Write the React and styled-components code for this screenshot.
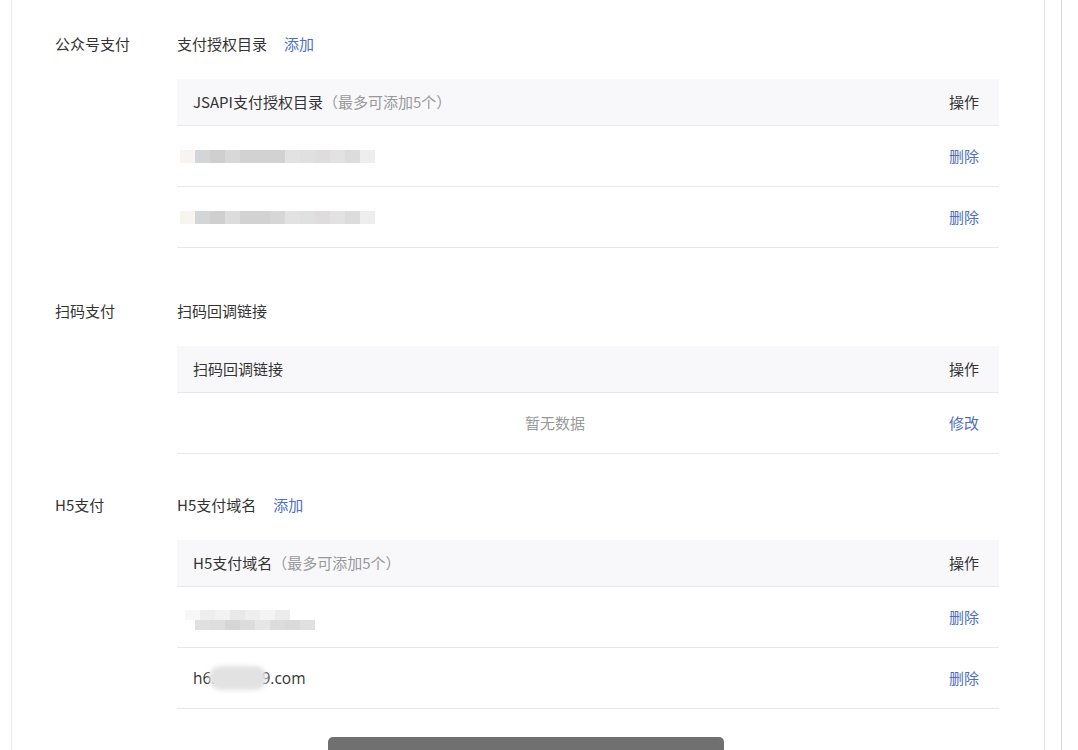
import styled, { createGlobalStyle } from 'styled-components';

const GlobalStyle = createGlobalStyle`
  html, body {
    margin: 0;
    padding: 0;
    background: #fff;
  }
  body {
    font-family: "Noto Sans CJK SC", "Noto Sans", sans-serif;
    font-size: 15px;
    color: #333;
    overflow: hidden;
  }
`;

const Outer = styled.div`
  width: 1062px;
  height: 750px;
  border-right: 1px solid #d9d9d9;
  padding-left: 11px;
  box-sizing: border-box;
`;

const Card = styled.div`
  width: 1034px;
  height: 750px;
  box-sizing: border-box;
  border-left: 1px solid #ececec;
  border-right: 1px solid #e4e4e4;
  padding: 34px 0 0 43px;
`;

const Section = styled.section`
  display: flex;
  margin-bottom: ${(p) => p.$gap}px;
`;

const Label = styled.div`
  width: 122px;
  flex-shrink: 0;
  line-height: 20px;
`;

const Body = styled.div`
  width: 822px;
`;

const TitleRow = styled.div`
  display: flex;
  align-items: center;
  line-height: 20px;
  margin-bottom: 25px;
`;

const Link = styled.a`
  color: #4f6fc3;
  cursor: pointer;
  margin-left: ${(p) => p.$ml || 0}px;
`;

const Table = styled.div`
  width: 822px;
`;

const Row = styled.div`
  display: grid;
  grid-template-columns: 1fr 66px;
  align-items: center;
  height: ${(p) => (p.$head ? 46 : 60)}px;
  background: ${(p) => (p.$head ? '#f8f8fa' : '#fff')};
  border-bottom: 1px solid #e8e8ec;
`;

const Cell = styled.div`
  padding-left: ${(p) => (p.$center ? 0 : 16)}px;
  display: flex;
  align-items: center;
  justify-content: ${(p) => (p.$center ? 'center' : 'flex-start')};
  line-height: 20px;
`;

const OpCell = styled.div`
  text-align: right;
  padding-right: 20px;
  line-height: 20px;
`;

const Hint = styled.span`
  color: #999;
`;

const Empty = styled.span`
  color: #999;
`;

const Mosaic = styled.div`
  display: flex;
  flex-direction: column;
  margin-left: ${(p) => p.$ml}px;
  margin-top: ${(p) => p.$mt || 0}px;
`;

const MosaicLine = styled.div`
  display: flex;
  height: ${(p) => p.$h}px;
  margin-left: ${(p) => p.$offset || 0}px;
`;

const Tile = styled.span`
  width: 15px;
  height: 100%;
  background: ${(p) => p.$c};
`;

const Smudge = styled.span`
  display: inline-block;
  width: 58px;
  height: 24px;
  margin: 0 -6px 0 -6px;
  background: #e2e2e2;
  border-radius: 12px;
  filter: blur(2px);
  vertical-align: middle;
`;

const Domain = styled.span`
  display: inline-flex;
  align-items: center;
  font-family: "Open Sans", "Noto Sans", sans-serif;
  font-size: 15.5px;
`;

const SaveBar = styled.button`
  position: fixed;
  left: 328px;
  top: 737px;
  width: 396px;
  height: 40px;
  border: none;
  border-radius: 5px;
  background: #707070;
`;

const rowA = ['#f8f5f0', '#d3d6d8', '#cfcfcf', '#d8d8d8', '#d2d2d2', '#d2d2d2', '#d2d2d2', '#e2e2e2', '#e0e0e0', '#dedcdc', '#e2e2e2', '#dcdcdc', '#eeeeee'];
const rowB = ['#f8f5f0', '#d3d6d8', '#cfcfcf', '#dcdcdc', '#d2d2d2', '#d2d2d2', '#d6d6d6', '#e2e2e2', '#e0e0e0', '#dedcdc', '#e2e2e2', '#dcdcdc', '#eeeeee'];
const h5Top = ['#f7f7f7', '#eeeeee', '#f2f2f2', '#e8e8e8', '#eeeeee', '#f4f4f4', '#ececec'];
const h5Bottom = ['#e0e0e0', '#dedede', '#d6d6d6', '#dcdcdc', '#e6e6e6', '#dcdcdc', '#dadada', '#e0e0e0'];

const Blur = ({ colors }) => (
  <Mosaic $ml={-13}>
    <MosaicLine $h={13}>
      {colors.map((c, i) => <Tile key={i} $c={c} />)}
    </MosaicLine>
  </Mosaic>
);

const App = () => (
  <>
    <GlobalStyle />
    <Outer>
      <Card>
        <Section $gap={53}>
          <Label>公众号支付</Label>
          <Body>
            <TitleRow>
              支付授权目录<Link $ml={17}>添加</Link>
            </TitleRow>
            <Table>
              <Row $head>
                <Cell>JSAPI支付授权目录<Hint>（最多可添加5个）</Hint></Cell>
                <OpCell>操作</OpCell>
              </Row>
              <Row>
                <Cell><Blur colors={rowA} /></Cell>
                <OpCell><Link>删除</Link></OpCell>
              </Row>
              <Row>
                <Cell><Blur colors={rowB} /></Cell>
                <OpCell><Link>删除</Link></OpCell>
              </Row>
            </Table>
          </Body>
        </Section>

        <Section $gap={41}>
          <Label>扫码支付</Label>
          <Body>
            <TitleRow>扫码回调链接</TitleRow>
            <Table>
              <Row $head>
                <Cell>扫码回调链接</Cell>
                <OpCell>操作</OpCell>
              </Row>
              <Row>
                <Cell $center><Empty>暂无数据</Empty></Cell>
                <OpCell><Link>修改</Link></OpCell>
              </Row>
            </Table>
          </Body>
        </Section>

        <Section $gap={0}>
          <Label>H5支付</Label>
          <Body>
            <TitleRow>
              H5支付域名<Link $ml={17}>添加</Link>
            </TitleRow>
            <Table>
              <Row $head>
                <Cell>H5支付域名<Hint>（最多可添加5个）</Hint></Cell>
                <OpCell>操作</OpCell>
              </Row>
              <Row>
                <Cell>
                  <Mosaic $ml={-8} $mt={6}>
                    <MosaicLine $h={10}>
                      {h5Top.map((c, i) => <Tile key={i} $c={c} />)}
                    </MosaicLine>
                    <MosaicLine $h={10} $offset={10}>
                      {h5Bottom.map((c, i) => <Tile key={i} $c={c} />)}
                    </MosaicLine>
                  </Mosaic>
                </Cell>
                <OpCell><Link>删除</Link></OpCell>
              </Row>
              <Row>
                <Cell>
                  <Domain>h6.<Smudge />9.com</Domain>
                </Cell>
                <OpCell><Link>删除</Link></OpCell>
              </Row>
            </Table>
          </Body>
        </Section>
      </Card>
    </Outer>
    <SaveBar aria-label="保存" />
  </>
);

export default App;
